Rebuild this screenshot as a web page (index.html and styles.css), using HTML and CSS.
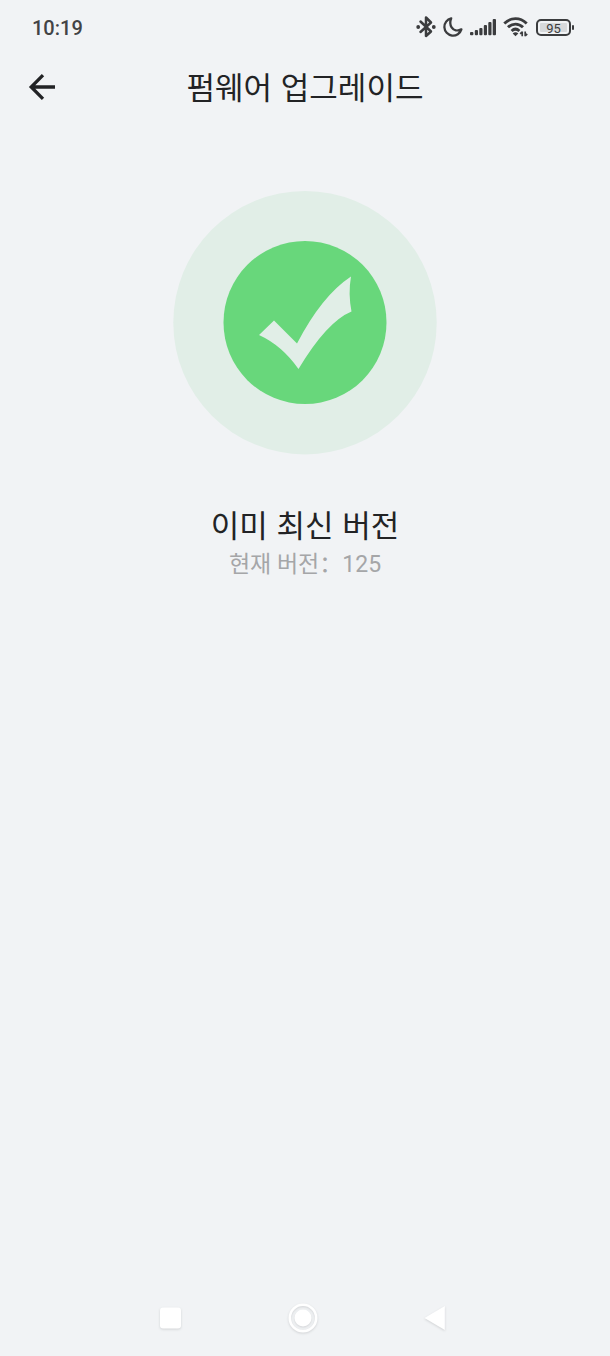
FILE: index.html
```html
<!DOCTYPE html>
<html lang="ko">
<head>
<meta charset="utf-8">
<meta name="viewport" content="width=device-width, initial-scale=1">
<title>펌웨어 업그레이드</title>
<link rel="stylesheet" href="styles.css">
</head>
<body>
<div class="screen">
  <div class="status-bar">
    <time class="clock">10:19</time>
    <div class="status-icons">
      <svg class="icon" width="20" height="24" viewBox="0 0 20 24" fill="none" stroke="currentColor" stroke-width="2.5" stroke-linejoin="round" stroke-linecap="round"><path d="M4.500 6.500 15 16.500 10 21V2.500L15 7.500 4.500 17"/><circle cx="2.200" cy="12" r="1" fill="currentColor" stroke-width="1.800"/><circle cx="17.800" cy="12" r="1" fill="currentColor" stroke-width="1.800"/></svg>
      <svg class="icon" width="20" height="24" viewBox="0 0 20 24" fill="none" stroke="currentColor" stroke-width="2.300" stroke-linejoin="round"><path d="M8.200 3.400A8.700 8.700 0 1 0 18.400 14.400C14.500 16.300 10.500 15.500 8.600 12.400 6.900 9.600 7 6.300 8.200 3.400Z"/></svg>
      <svg class="icon" width="26" height="24" viewBox="0 0 26 24" fill="currentColor"><rect x="0" y="17" width="3.400" height="3.200" rx="1"/><rect x="4.800" y="15" width="3.200" height="5.200" rx="1"/><rect x="9.300" y="13" width="3.200" height="7.200" rx="1"/><rect x="13.800" y="10" width="3.200" height="10.200" rx="1"/><rect x="18.300" y="7" width="3.200" height="13.200" rx="1"/><rect x="22.700" y="4" width="3.300" height="16.200" rx="1"/></svg>
      <svg class="icon" width="26" height="24" viewBox="0 0 26 24" fill="none" stroke="currentColor" stroke-width="2.900"><path d="M1.300 8.500C8 2 17 2 23.700 8.500M5 12.300C9.500 8 15.500 8 20 12.300M8.600 16C11 13.700 14 13.700 16.400 16"/><path d="M12.500 21.200 9.700 18.400Q12.500 16.200 15.300 18.400Z" fill="currentColor" stroke="none"/><path d="M19.200 21.200V16.500M17.200 18.800l2-2M22.200 16.500v4.700M24.200 18.900l-2 2" stroke-width="1.700"/></svg>
      <div class="battery"><span class="battery-level">95</span></div>
    </div>
  </div>

  <header class="app-bar">
    <button class="back" type="button" aria-label="뒤로">
      <svg class="icon" width="28" height="28" viewBox="0 0 28 28" fill="none" stroke="currentColor" stroke-width="3.300"><path d="M27 14H4M15 2.200 3.200 14 15 25.800"/></svg>
    </button>
    <h1 class="title">펌웨어 업그레이드</h1>
  </header>

  <main class="content">
    <svg class="success" viewBox="0 0 264 264" role="img" aria-label="완료">
      <circle class="halo" cx="132" cy="131.700" r="131.700"/>
      <circle class="disc" cx="132" cy="131.500" r="81.500"/>
      <path class="halo" d="M86 144 101 129.500 124 152.500Q149 104.500 178 85.500Q175 102.500 178.500 120.500Q154 130.500 125.500 178Q109 154.500 86 144Z"/>
    </svg>
    <h2 class="message">이미 최신 버전</h2>
    <p class="version">현재 버전<span class="colon" lang="zh-CN">：</span>125</p>
  </main>

  <nav class="nav-bar">
    <button class="nav-button" type="button" aria-label="최근 앱"><svg class="nav-icon" width="32" height="32" viewBox="0 0 32 32"><rect x="6" y="5.500" width="21" height="21" rx="3" fill="currentColor"/></svg></button>
    <button class="nav-button" type="button" aria-label="홈"><svg class="nav-icon" width="32" height="32" viewBox="0 0 32 32"><circle cx="16" cy="16" r="13.200" fill="none" stroke="currentColor" stroke-width="2.600"/><circle cx="16" cy="16" r="8.500" fill="currentColor"/></svg></button>
    <button class="nav-button" type="button" aria-label="뒤로 가기"><svg class="nav-icon" width="32" height="32" viewBox="0 0 32 32"><path d="M4.500 16 24.800 4v24Z" fill="currentColor"/></svg></button>
  </nav>
</div>
</body>
</html>
```
FILE: styles.css
```css
* {
  box-sizing: border-box;
}

body {
  margin: 0;
  background: #f1f3f5;
  color: #222325;
  font-family: "Noto Sans CJK KR", sans-serif;
}

button {
  padding: 0;
  border: 0;
  background: none;
  color: inherit;
}

h1,
h2,
p {
  margin: 0;
  font-weight: 400;
}

.screen {
  display: flex;
  flex-direction: column;
  min-height: 100vh;
}

.icon,
.nav-icon {
  display: block;
}

.status-bar {
  display: flex;
  align-items: center;
  justify-content: space-between;
  height: 54px;
  padding: 0 36px 0 32px;
  color: #3b3c3e;
}

.clock {
  padding-top: 2px;
  color: #424345;
  font: 500 20px/24px Roboto, sans-serif;
}

.status-icons {
  display: flex;
  align-items: center;
  gap: 7px;
}

.battery {
  display: flex;
  position: relative;
  width: 35px;
  height: 17px;
  margin-right: 3px;
  padding: 2px;
  border: 2px solid currentColor;
  border-radius: 5px;
}

.battery::after {
  content: "";
  position: absolute;
  top: 4px;
  right: -5px;
  width: 2px;
  height: 5px;
  border-radius: 1px;
  background: currentColor;
}

.battery-level {
  flex: 1;
  border-radius: 1px;
  background: #d7d9db;
  font: 400 13px/11px Roboto, sans-serif;
  text-align: center;
}

.app-bar {
  display: grid;
  grid-template-columns: 28px 1fr 28px;
  align-items: center;
  height: 66px;
  padding: 0 28px;
}

.title {
  padding-bottom: 2px;
  font-size: 31px;
  line-height: 40px;
  text-align: center;
}

.content {
  display: flex;
  flex: 1;
  flex-direction: column;
  align-items: center;
  padding-top: 71px;
}

.success {
  width: 264px;
  height: 264px;
}

.halo {
  fill: #e1eee7;
}

.disc {
  fill: #68d77b;
}

.message {
  margin-top: 49px;
  font-size: 31px;
  line-height: 40px;
}

.version {
  margin-top: 4px;
  color: #a5a6a8;
  font-family: Roboto, "Noto Sans CJK KR", sans-serif;
  font-size: 23px;
  line-height: 34px;
}

.colon {
  font-family: "Noto Sans CJK SC", sans-serif;
  line-height: 1;
}

.nav-bar {
  display: flex;
  justify-content: center;
  gap: 101px;
  padding: 0 4px 22px 0;
  color: #fff;
}

.nav-icon {
  filter: drop-shadow(0 1px 1px #d0d2d4);
}
```
